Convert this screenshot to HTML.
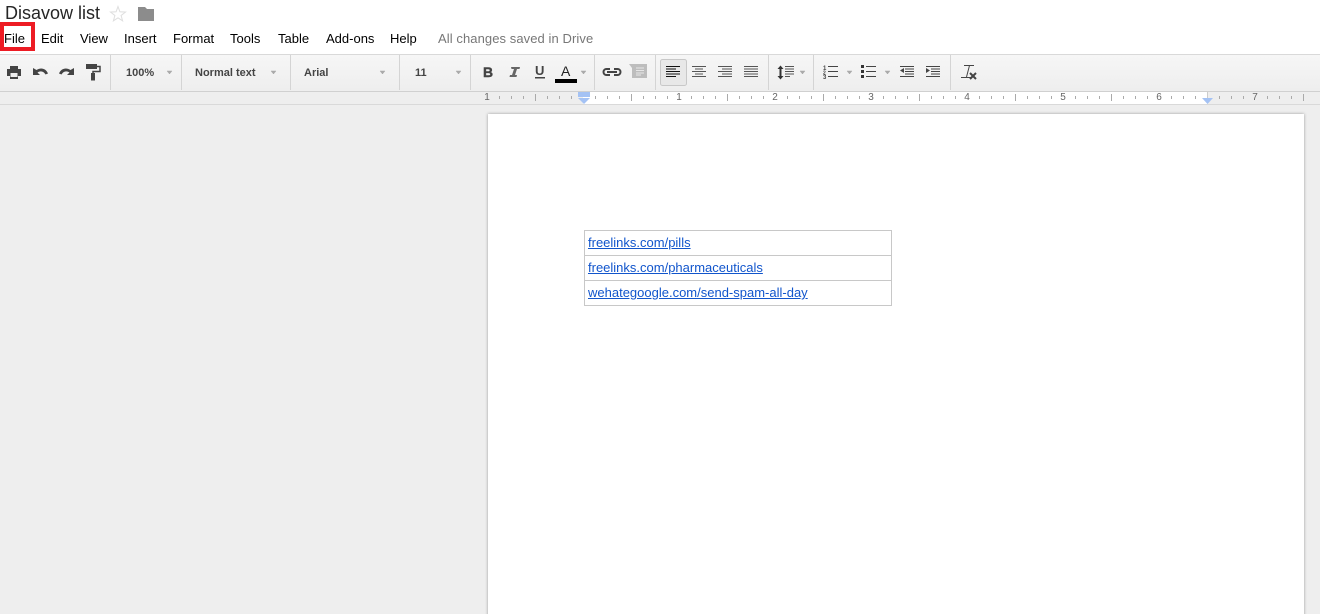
<!DOCTYPE html>
<html><head><meta charset="utf-8"><style>
html,body{margin:0;padding:0;width:1320px;height:614px;overflow:hidden;background:#fff}
body{position:relative;font-family:"Liberation Sans",Arial,sans-serif}
.a{position:absolute;white-space:nowrap}
.m{top:31px;font-size:13px;line-height:16px;color:#000}
.l{left:588px;font-size:13px;line-height:16px;color:#1155cc;text-decoration:underline}
.n{top:92px;width:12px;text-align:center;font-size:10px;line-height:12px;color:#666}
</style></head><body>
<div class="a" style="left:5px;top:3px;font-size:18px;line-height:21px;color:#262626">Disavow list</div>
<div class="a m" style="left:4px">File</div>
<div class="a m" style="left:41px">Edit</div>
<div class="a m" style="left:80px">View</div>
<div class="a m" style="left:124px">Insert</div>
<div class="a m" style="left:173px">Format</div>
<div class="a m" style="left:230px">Tools</div>
<div class="a m" style="left:278px">Table</div>
<div class="a m" style="left:326px">Add-ons</div>
<div class="a m" style="left:390px">Help</div>
<div class="a m" style="left:438px;color:#777;letter-spacing:.08px">All changes saved in Drive</div>
<div class="a" style="left:0;top:22px;width:27px;height:21px;border:4px solid #ed1c24"></div>

<div class="a" style="left:0;top:54px;width:1320px;height:36px;border-top:1px solid #d9d9d9;border-bottom:1px solid #d0d0d0;background:linear-gradient(#f6f6f6,#eeeeee)"></div>
<div class="a" style="left:0;top:92px;width:1320px;height:12px;background:#eeeeee;border-bottom:1px solid #d9d9d9"></div>
<div class="a" style="left:583px;top:92px;width:624px;height:12px;background:#fff"></div>
<div class="a" style="left:0;top:105px;width:1320px;height:509px;background:#eeeeee"></div>
<div class="a" style="left:488px;top:114px;width:816px;height:520px;background:#fff;box-shadow:0 0 3px rgba(0,0,0,.35)"></div>

<svg class="a" style="left:0;top:0" width="1320" height="614" viewBox="0 0 1320 614" xmlns="http://www.w3.org/2000/svg">
<defs><pattern id="r" patternUnits="userSpaceOnUse" x="487" y="92" width="96" height="12">
<path d="M12 4h1v3h-1zM24 4h1v3h-1zM36 4h1v3h-1zM48 2h1v7h-1zM60 4h1v3h-1zM72 4h1v3h-1zM84 4h1v3h-1z" fill="#aaa"/>
</pattern></defs>
<rect x="487" y="92" width="817" height="12" fill="url(#r)"/>
<!-- star -->
<path d="M118 6.500l1.900 5.300 5.600.3-4.400 3.400 1.500 5.300-4.600-3-4.600 3 1.500-5.300-4.400-3.400 5.600-.3z" fill="none" stroke="#dedede"/>
<!-- folder -->
<path d="M138 7h7l2 2h7v12h-16z" fill="#8c8c8c"/>
<!-- separators -->
<path d="M110.500 55v35M181.500 55v35M290.500 55v35M399.500 55v35M470.500 55v35M594.500 55v35M655.500 55v35M768.500 55v35M813.500 55v35M950.500 55v35" stroke="#d4d4d4"/>
<!-- print -->
<path d="M10 66h8v3h3v7h-3v3h-8v-3h-3v-7h3z" fill="#444"/>
<rect x="10.500" y="73" width="7" height="4" fill="#eee"/>
<!-- undo / redo -->
<path d="M33 68v7h7l-2.500-2.500c3-2 6-1.500 8 2l2.500-1c-2-5-7-6.500-11.500-3.500z" fill="#444"/>
<path d="M74 68v7h-7l2.500-2.500c-3-2-6-1.500-8 2l-2.500-1c2-5 7-6.500 11.500-3.500z" fill="#444"/>
<!-- roller -->
<rect x="86" y="64" width="11" height="5" fill="#444"/>
<path d="M97 66.500h3v5h-7v2" fill="none" stroke="#444" stroke-width="1.500"/>
<rect x="91" y="73" width="4" height="7.500" fill="#444"/>
<text x="126" y="76" font-size="11" font-weight="bold" fill="#444" font-family="Liberation Sans">100%</text>
<text x="195" y="76" font-size="11" font-weight="bold" fill="#444" font-family="Liberation Sans">Normal text</text>
<text x="304" y="76" font-size="11" font-weight="bold" fill="#444" font-family="Liberation Sans">Arial</text>
<text x="415" y="76" font-size="11" font-weight="bold" fill="#444" font-family="Liberation Sans">11</text>
<!-- carets -->
<path d="M167 71h5l-2.500 3zM271 71h5l-2.500 3zM380 71h5l-2.500 3zM456 71h5l-2.500 3zM581 71h5l-2.500 3zM800 71h5l-2.500 3zM847 71h5l-2.500 3zM885 71h5l-2.500 3z" fill="#aaa" stroke="#aaa" stroke-width=".5"/>
<!-- B I U A -->
<text x="483" y="77" font-size="14" font-weight="bold" fill="#444" font-family="Liberation Sans" stroke="#444" stroke-width=".4">B</text>
<path d="M511 67h9l-.5 2h-2.500l-2 6h2l-.5 2h-7l.5-2h2l2-6h-2.500z" fill="#666"/>
<text x="535" y="75" font-size="13" font-weight="bold" fill="#444" font-family="Liberation Sans">U</text>
<rect x="535" y="77" width="10" height="1.500" fill="#444"/>
<text x="561" y="76" font-size="14" fill="#222" font-family="Liberation Sans">A</text>
<rect x="555" y="79" width="22" height="4" fill="#000"/>
<!-- link -->
<path d="M610 69h-3.500a3 3 0 0 0 0 6h3.500M614 69h3.500a3 3 0 0 1 0 6h-3.500M607 72h10" fill="none" stroke="#444" stroke-width="2"/>
<!-- comment -->
<path d="M629 64h18v14h-15v-10z" fill="#bdbdbd"/>
<path d="M636 68h8M636 70.500h8M636 73h8M636 75h5" stroke="#e6e6e6"/>
<!-- align selected -->
<rect x="660.500" y="59.500" width="26" height="26" rx="2" fill="#e8e8e8" stroke="#c8c8c8"/>
<path d="M666 66.500h14M666 69h10M666 71.500h14M666 74h14M666 76.500h10" stroke="#111"/>
<path d="M692 66.500h14M695 69h8M692 71.500h14M695 74h8M692 76.500h14" stroke="#555"/>
<path d="M718 66.500h14M722 69h10M718 71.500h14M722 74h10M718 76.500h14" stroke="#555"/>
<path d="M744 66.500h14M744 69h14M744 71.500h14M744 74h14M744 76.500h14" stroke="#555"/>
<!-- line spacing -->
<path d="M780.500 68v9" stroke="#333" stroke-width="2"/><path d="M777.500 69l3-3.500 3 3.500zM777.500 76l3 3.500 3-3.500z" fill="#333"/>
<path d="M785 66.500h9M785 69h9M785 71.500h9M785 74h9M785 76.500h5" stroke="#555"/>
<!-- numbered list -->
<text x="823" y="70" font-size="6" font-weight="bold" fill="#444" font-family="Liberation Sans">1</text>
<text x="823" y="74.500" font-size="5" font-weight="bold" fill="#444" font-family="Liberation Sans">2</text>
<text x="823" y="79" font-size="6" font-weight="bold" fill="#444" font-family="Liberation Sans">3</text>
<path d="M828 66.500h10M828 71.500h10M828 76.500h10" stroke="#444"/>
<!-- bullet list -->
<path d="M861 65h3v3h-3zM861 70h3v3h-3zM861 75h3v3h-3z" fill="#333"/>
<path d="M866 66.500h10M866 71.500h10M866 76.500h10" stroke="#444"/>
<!-- indent -->
<path d="M900 66.500h14M905 69h9M905 71.500h9M905 74h9M900 76.500h14" stroke="#444"/><path d="M904 68v5l-4-2.500z" fill="#444"/>
<path d="M926 66.500h14M931 69h9M931 71.500h9M931 74h9M926 76.500h14" stroke="#444"/><path d="M926 68v5l4-2.500z" fill="#444"/>
<!-- clear formatting -->
<path d="M964 65.500h10M969.500 65.500l-3 11.500M961 77.500h10" stroke="#444" fill="none"/>
<path d="M970 73l6 6M976 73l-6 6" stroke="#444" stroke-width="2"/>
<!-- ruler markers -->
<path d="M578 92h12v5h-12z" fill="#a4c2f4"/>
<path d="M578 98h12l-6 6z" fill="#a4c2f4"/>
<path d="M1202 98h11l-5.500 6z" fill="#a4c2f4"/>
<path d="M1207.500 92v6" stroke="#ccc"/>
<!-- table -->
<path d="M584.500 230.500h307v75h-307zM584.500 255.500h307M584.500 280.500h307" fill="#fff" stroke="#c8c8c8"/>
</svg>

<div class="a n" style="left:481px">1</div>
<div class="a n" style="left:673px">1</div>
<div class="a n" style="left:769px">2</div>
<div class="a n" style="left:865px">3</div>
<div class="a n" style="left:961px">4</div>
<div class="a n" style="left:1057px">5</div>
<div class="a n" style="left:1153px">6</div>
<div class="a n" style="left:1249px">7</div>

<div class="a l" style="top:235px">freelinks.com/pills</div>
<div class="a l" style="top:260px">freelinks.com/pharmaceuticals</div>
<div class="a l" style="top:285px">wehategoogle.com/send-spam-all-day</div>
</body></html>
